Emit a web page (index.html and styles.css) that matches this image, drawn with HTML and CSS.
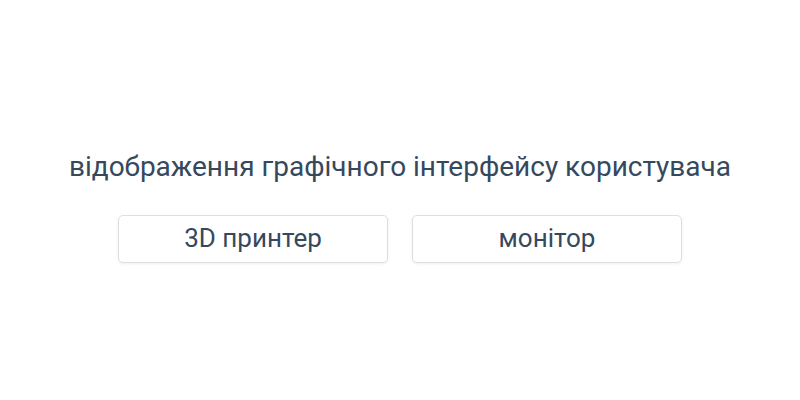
FILE: index.html
```html
<!DOCTYPE html>
<html lang="uk">
<head>
  <meta charset="UTF-8">
  <meta name="viewport" content="width=device-width, initial-scale=1.0">
  <title>відображення графічного інтерфейсу користувача</title>
  <link rel="stylesheet" href="styles.css">
</head>
<body>
  <main class="screen">
    <h1 class="title">відображення графічного інтерфейсу користувача</h1>
    <div class="choices">
      <button class="choice">3D принтер</button>
      <button class="choice">монітор</button>
    </div>
  </main>
</body>
</html>
```

FILE: styles.css
```css
body {
  margin: 0;
  font-family: Roboto, "Noto Sans", sans-serif;
  background: #fff;
  color: #35495e;
}
.screen {
  height: 400px;
  box-sizing: border-box;
  padding-top: 150px;
  display: flex;
  flex-direction: column;
  align-items: center;
}
.title {
  margin: 0 0 32px;
  font-size: 28px;
  font-weight: 400;
}
.choices {
  display: flex;
  gap: 24px;
}
.choice {
  width: 270px;
  height: 48px;
  padding: 0 0 3px;
  background: #fff;
  border: 1px solid #dedede;
  border-radius: 5px;
  box-shadow: 0 1px 3px rgba(0,0,0,0.07);
  font-family: inherit;
  font-size: 26px;
  color: #35495e;
  cursor: pointer;
}
```
